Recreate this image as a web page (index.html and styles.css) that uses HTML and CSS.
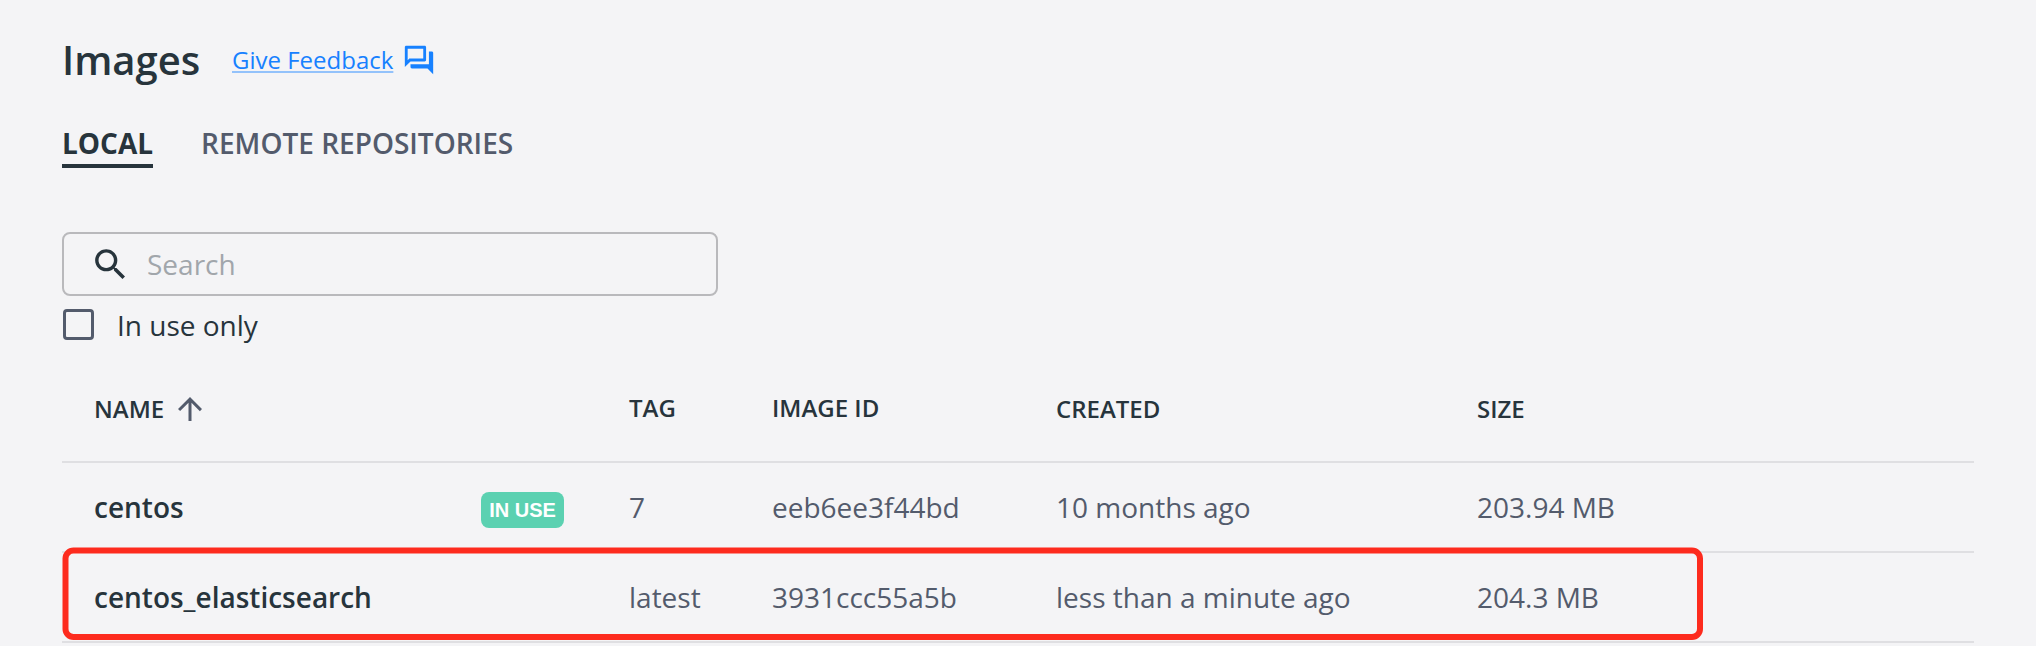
FILE: index.html
```html
<!DOCTYPE html>
<html lang="en">
<head>
<meta charset="utf-8">
<title>Images</title>
<link rel="stylesheet" href="styles.css">
</head>
<body>
<main class="page">
  <header class="heading">
    <h1 class="title">Images</h1>
    <a class="feedback"><span class="feedback-text">Give Feedback</span><svg class="feedback-icon" viewBox="0 0 24 24"><path d="M15 4v7H5.17L4 12.17V4h11m1-2H3c-.55 0-1 .45-1 1v14l4-4h10c.55 0 1-.45 1-1V3c0-.55-.45-1-1-1zm5 4h-2v9H6v2c0 .55.45 1 1 1h11l4 4V7c0-.55-.45-1-1-1z"/></svg></a>
  </header>
  <nav class="tabs">
    <a class="tab tab-active">LOCAL</a>
    <a class="tab">REMOTE REPOSITORIES</a>
  </nav>
  <div class="search">
    <svg class="search-icon" viewBox="0 0 24 24"><path d="M15.5 14h-.79l-.28-.27C15.41 12.59 16 11.11 16 9.5 16 5.91 13.09 3 9.5 3S3 5.91 3 9.5 5.91 16 9.5 16c1.61 0 3.09-.59 4.23-1.57l.27.28v.79l5 4.99L20.49 19l-4.99-5zm-6 0C7.01 14 5 11.99 5 9.5S7.01 5 9.5 5 14 7.01 14 9.5 11.99 14 9.5 14z"/></svg>
    <span class="placeholder">Search</span>
  </div>
  <label class="filter"><span class="checkbox"></span><span class="filter-text">In use only</span></label>
  <section class="table">
    <div class="row head">
      <div class="cell name">NAME<svg class="sort" viewBox="0 0 24 24"><path d="M4 12l1.41 1.41L11 7.83V20h2V7.83l5.58 5.59L20 12l-8-8-8 8z"/></svg></div>
      <div class="cell raised">TAG</div>
      <div class="cell raised">IMAGE ID</div>
      <div class="cell">CREATED</div>
      <div class="cell">SIZE</div>
    </div>
    <div class="row">
      <div class="cell name"><span class="image-name">centos</span><span class="badge">IN USE</span></div>
      <div class="cell">7</div>
      <div class="cell">eeb6ee3f44bd</div>
      <div class="cell">10 months ago</div>
      <div class="cell">203.94 MB</div>
    </div>
    <div class="row">
      <div class="cell name"><span class="image-name">centos_elasticsearch</span></div>
      <div class="cell">latest</div>
      <div class="cell">3931ccc55a5b</div>
      <div class="cell">less than a minute ago</div>
      <div class="cell">204.3 MB</div>
      <svg class="highlight" viewBox="0 0 1642 94"><rect x="3.5" y="3.5" width="1634.5" height="86.5" rx="8"/></svg>
    </div>
  </section>
</main>
</body>
</html>
```

FILE: styles.css
```css
* { box-sizing: border-box; }
html, body { margin: 0; height: 646px; overflow: hidden; }
body {
  background: #f4f4f6;
  color: #27343c;
  font-family: "Open Sans", sans-serif;
  font-size: 28px;
}
svg { fill: currentColor; flex: none; }
.page { padding: 32px 62px 0; }
.heading { display: flex; align-items: center; height: 55px; }
.title { margin: 0; width: 170px; font-size: 40px; font-weight: 600; line-height: 55px; }
.feedback { display: flex; align-items: center; color: #1781ff; font-size: 24px; line-height: 56px; }
.feedback-text {
  text-decoration: underline 2px #93c2fb;
  text-underline-offset: 2px;
  text-decoration-skip-ink: none;
}
.feedback-icon { width: 34px; height: 34px; margin-left: 9px; }
.tabs { display: flex; gap: 48px; margin-top: 35px; }
.tab { border-bottom: 4px solid transparent; line-height: 42px; font-weight: 600; color: #535b6c; }
.tab-active { border-color: #27343c; color: #27343c; font-weight: 700; }
.search {
  display: flex;
  align-items: center;
  width: 656px;
  height: 64px;
  margin-top: 64px;
  padding-left: 26px;
  border: 2px solid #b9b9bc;
  border-radius: 8px;
}
.search-icon { width: 41px; height: 41px; }
.placeholder { margin-left: 16px; color: #a1a6ab; }
.filter { display: flex; align-items: center; height: 41px; margin-top: 8px; }
.checkbox { width: 31px; height: 31px; margin-left: 1px; border: 3px solid #535b6c; border-radius: 4px; }
.filter-text { margin-left: 23px; }
.table { margin-top: 10px; }
.row {
  display: grid;
  grid-template-columns: 535px 143px 284px 421px 1fr;
  align-items: center;
  height: 90px;
  padding-left: 32px;
  border-bottom: 2px solid #dfdfe2;
  color: #535b6c;
  position: relative;
}
.head { height: 108px; font-size: 24px; font-weight: 600; color: #27343c; }
.cell { white-space: nowrap; }
.raised { padding-bottom: 2px; }
.name { display: flex; align-items: center; }
.sort { width: 36px; height: 36px; margin: 2px 0 0 8px; color: #535b6c; }
.image-name { width: 387px; font-weight: 600; color: #27343c; }
.badge {
  width: 83px;
  height: 36px;
  margin-top: 6px;
  border-radius: 8px;
  background: #5bd1b1;
  color: #fff;
  font: 700 20px/36px "Liberation Sans", sans-serif;
  text-align: center;
}
.highlight {
  position: absolute;
  left: 0;
  top: -6px;
  width: 1642px;
  height: 94px;
  fill: none;
  stroke: #fd2b1e;
  stroke-width: 6px;
}
```
